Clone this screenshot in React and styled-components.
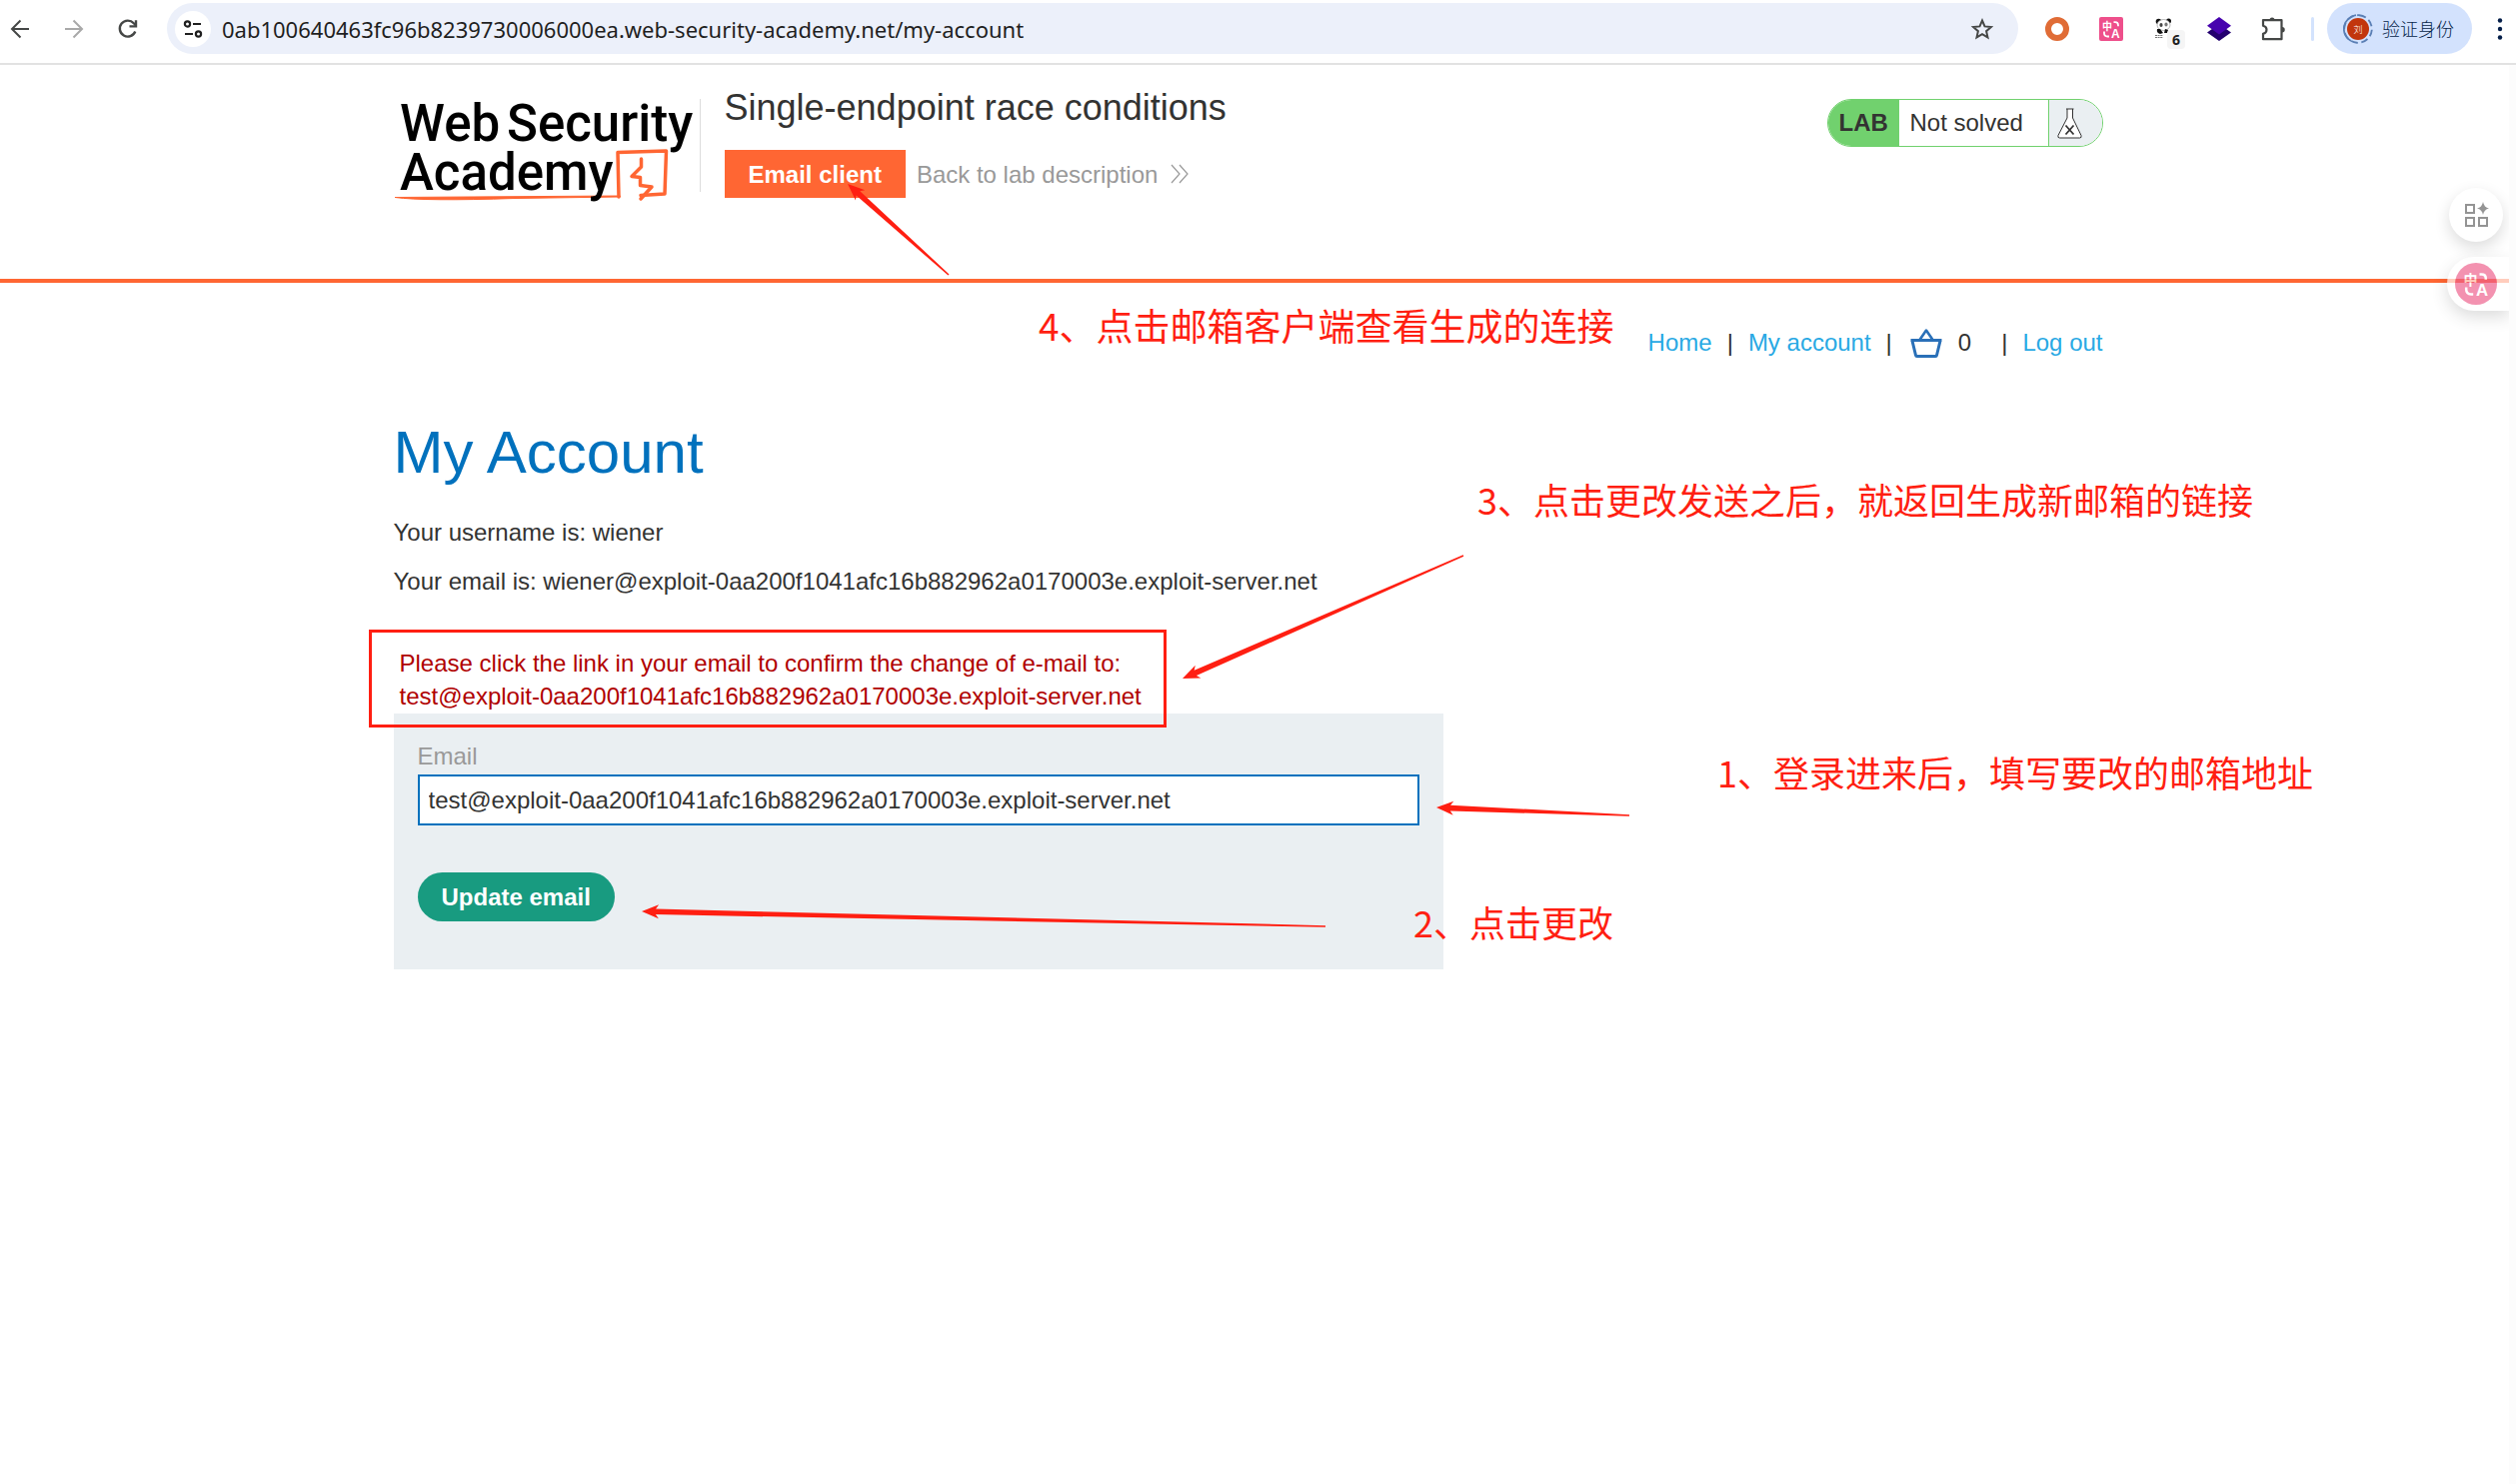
import React from "react";
import styled, { createGlobalStyle } from "styled-components";

const GlobalStyle = createGlobalStyle`
  * {
    box-sizing: border-box;
  }
  body {
    margin: 0;
    background: #fff;
    color: #333332;
    font-family: "Liberation Sans", Arial, sans-serif;
    font-size: 24px;
    line-height: 33px;
  }
  svg {
    display: block;
    flex: none;
  }
  button {
    border: 0;
    padding: 0;
    background: none;
    font: inherit;
    cursor: pointer;
  }
  a {
    text-decoration: none;
  }
`;

const ANNOTATION_RED = "#ff1f12";

/* ---------- browser bar ---------- */

const Toolbar = styled.header`
  display: flex;
  align-items: center;
  height: 65px;
  padding: 3px 4px 9px 8px;
  border-bottom: 2px solid #e2e2e2;
`;

const NavButtons = styled.div`
  display: flex;
  gap: 30px;
  margin-right: 27px;
`;

const IconButton = styled.button`
  position: relative;
  width: 24px;
  height: 24px;
  color: ${(props) => (props.$muted ? "#a9a9a9" : "#454746")};
`;

const Omnibox = styled.div`
  flex: 1;
  display: flex;
  align-items: center;
  height: 51px;
  padding: 0 24px 0 8px;
  border-radius: 26px;
  background: #ecf0fa;
`;

const SiteInfo = styled.button`
  display: flex;
  align-items: center;
  justify-content: center;
  width: 36px;
  height: 36px;
  margin-right: 11px;
  border-radius: 50%;
  background: #fff;
`;

const UrlInput = styled.input`
  flex: 1;
  min-width: 0;
  border: 0;
  padding: 0;
  background: none;
  color: #1f1f1f;
  font-family: "Noto Sans", "Open Sans", sans-serif;
  font-size: 22px;
  outline: none;
`;

const Extensions = styled.div`
  display: flex;
  gap: 30px;
  margin: 0 26px 0 27px;
`;

const Badge = styled.span`
  position: absolute;
  left: 14px;
  top: 13px;
  width: 18px;
  height: 19px;
  border-radius: 4px;
  background: #f5f5f5;
  color: #1f1f1f;
  font: bold 14px/19px "Noto Sans", sans-serif;
  text-align: center;
`;

const Separator = styled.span`
  width: 3px;
  height: 24px;
  margin-right: 13px;
  border-radius: 2px;
  background: #d3e3fd;
`;

const Profile = styled.button`
  display: flex;
  align-items: center;
  gap: 9px;
  height: 51px;
  padding: 0 18px 0 16px;
  margin-right: 16px;
  border-radius: 26px;
  background: #d3e2fd;
  color: #041e49;
  font-family: "Noto Sans CJK SC", sans-serif;
  font-size: 18px;
  font-weight: 300;
`;

/* ---------- page ---------- */

const Page = styled.div`
  position: relative;
  padding-right: 20px;
`;

const Container = styled.div`
  max-width: 1710px;
  margin: 0 auto;
`;

const LabHeader = styled.section`
  margin-right: -20px;
  padding-right: 20px;
  border-bottom: 4px solid #ff6633;
`;

const HeaderRow = styled(Container)`
  display: flex;
  align-items: flex-start;
  min-height: 214px;
`;

const LogoLink = styled.a`
  margin-top: 34px;
  padding-right: 6px;
`;

const HeaderDivider = styled.span`
  width: 1px;
  height: 93px;
  margin: 34px 24px 0 0;
  background: #dcdcdc;
`;

const TitleBlock = styled.div`
  flex: 1;
  padding-top: 23px;
`;

const LabTitle = styled.h2`
  margin: 0 0 22px;
  font-size: 36px;
  font-weight: normal;
  line-height: 40px;
`;

const TitleLinks = styled.div`
  display: flex;
  align-items: center;
  gap: 11px;
`;

const EmailClient = styled.a`
  height: 48px;
  padding: 0 24px;
  background: #ff6633;
  color: #fff;
  font-weight: bold;
  line-height: 50px;
`;

const BackLink = styled.a`
  display: flex;
  align-items: center;
  gap: 13px;
  color: #999;
`;

const LabStatus = styled.div`
  display: flex;
  width: 276px;
  height: 48px;
  margin-top: 34px;
  border: 1px solid #71d16e;
  border-radius: 24px;
  overflow: hidden;
  line-height: 46px;
`;

const LabTag = styled.strong`
  width: 71px;
  padding-left: 11px;
  background: #71d16e;
`;

const LabState = styled.span`
  flex: 1;
  padding-left: 11px;
`;

const LabFlask = styled.span`
  width: 54px;
  padding: 8px 0 0 8px;
  border-left: 1px solid #71d16e;
  background: #eaeff2;
`;

const AccountNav = styled.nav`
  display: flex;
  align-items: center;
  justify-content: flex-end;
  gap: 15px;
  padding-top: 44px;
  line-height: 32px;
  a {
    color: #29a9e4;
  }
`;

const BasketLink = styled.a`
  padding-left: 2px;
`;

const CartCount = styled.span`
  margin-right: 15px;
`;

const PageTitle = styled.h1`
  margin: 60px 0 29px;
  color: #0071bd;
  font-size: 60px;
  font-weight: normal;
  line-height: 68px;
`;

const Info = styled.p`
  margin: 0 0 16px;
`;

const Warning = styled.p`
  margin: 49px 0 1px;
  padding-left: 6px;
  color: #b00000;
`;

const EmailForm = styled.form`
  max-width: 1050px;
  padding: 26px 24px 48px;
  background: #eaeff2;
`;

const Label = styled.label`
  display: block;
  margin-bottom: 2px;
  color: #999;
`;

const EmailInput = styled.input`
  display: block;
  width: 100%;
  height: 51px;
  margin-bottom: 47px;
  padding: 0 9px;
  border: 2px solid #0071bd;
  background: #fff;
  color: #333332;
  font: inherit;
  outline: none;
`;

const SubmitButton = styled.button`
  height: 49px;
  padding: 0 24px;
  border-radius: 25px;
  background: #189b80;
  color: #fff;
  font-weight: bold;
`;

/* ---------- things that float over the page ---------- */

const ScrollTrack = styled.div`
  position: fixed;
  top: 65px;
  right: 0;
  bottom: 0;
  width: 7px;
  background: #fcfcfc;
`;

const FloatButtons = styled.aside`
  position: absolute;
  top: 123px;
  right: 7px;
  display: flex;
  flex-direction: column;
  align-items: flex-end;
  gap: 15px;
`;

const ToolsButton = styled.button`
  display: flex;
  align-items: center;
  justify-content: center;
  width: 54px;
  height: 54px;
  margin-right: 6px;
  border-radius: 50%;
  background: #fff;
  box-shadow: 0 6px 16px rgba(0, 0, 0, 0.14);
`;

const TranslateTab = styled.button`
  width: 62px;
  height: 54px;
  padding-left: 8px;
  border-radius: 27px 0 0 27px;
  background: #fff;
  box-shadow: 0 6px 16px rgba(0, 0, 0, 0.2);
  opacity: 0.68;
`;

const Drawing = styled.svg`
  position: absolute;
  top: 0;
  left: 0;
  pointer-events: none;
`;

const Note = styled.div`
  position: absolute;
  left: ${(props) => props.$x}px;
  top: ${(props) => props.$y}px;
  color: ${ANNOTATION_RED};
  font-family: "Noto Sans CJK SC", sans-serif;
  font-size: ${(props) => props.$size || 36}px;
  line-height: 52px;
  white-space: nowrap;
`;

/* ---------- icons ---------- */

const Stroke = ({ size = 24, width = 2, children, ...rest }) => (
  <svg
    width={size}
    height={size}
    viewBox="0 0 24 24"
    fill="none"
    stroke="currentColor"
    strokeWidth={width}
    {...rest}
  >
    {children}
  </svg>
);

const BackIcon = () => (
  <Stroke>
    <path d="M21 12H4.500M12.500 3.500L4 12l8.500 8.500" />
  </Stroke>
);

const ForwardIcon = () => (
  <Stroke>
    <path d="M3 12h16.500M11.500 3.500L20 12l-8.500 8.500" />
  </Stroke>
);

const ReloadIcon = () => (
  <Stroke width={2.4}>
    <path d="M19.300 14.500A8 8 0 1 1 17.800 6.300L20 8.500" />
    <path d="M20 3.200v6.200h-6.500" />
  </Stroke>
);

const TuneIcon = () => (
  <svg width="20" height="20" viewBox="0 0 20 20" fill="none" stroke="#1f1f1f" strokeWidth="2.200">
    <circle cx="4.500" cy="5" r="2.600" />
    <path d="M10 5h8M2 15h8" />
    <circle cx="15.500" cy="15" r="2.600" />
  </svg>
);

const StarIcon = () => (
  <Stroke>
    <path
      strokeLinejoin="miter"
      d="M12 3.500l2.500 5.900 6.400.6-4.800 4.200 1.400 6.200L12 17.100l-5.500 3.300 1.400-6.200L3.100 10l6.400-.6z"
    />
  </Stroke>
);

const RingIcon = () => (
  <svg width="24" height="24" viewBox="0 0 24 24">
    <circle cx="12" cy="12" r="9" fill="none" stroke="#e06c36" strokeWidth="6" />
  </svg>
);

const TranslateGlyph = () => (
  <g fill="#fff" stroke="none">
    <text x="3" y="12.500" fontSize="10" fontWeight="700" fontFamily="Noto Sans CJK SC">
      中
    </text>
    <text x="12" y="20.500" fontSize="12" fontWeight="700" fontFamily="Liberation Sans">
      A
    </text>
    <path
      d="M14.500 5.200h1.500q3 0 3 3v1M5 14.500v1.500q0 3.500 3.500 3.500h1.500"
      fill="none"
      stroke="#fff"
      strokeWidth="1.800"
    />
  </g>
);

const TranslateIcon = () => (
  <svg width="24" height="24" viewBox="0 0 24 24">
    <rect width="24" height="24" rx="2" fill="#ee4f8b" />
    <TranslateGlyph />
  </svg>
);

const TranslateRound = () => (
  <svg width="42" height="42" viewBox="-3 -3 30 30">
    <circle cx="12" cy="12" r="15" fill="#ee5f8b" />
    <TranslateGlyph />
  </svg>
);

const PandaIcon = () => (
  <svg width="24" height="24" viewBox="0 0 24 24">
    <circle cx="5.500" cy="4.500" r="2.800" fill="#111" />
    <circle cx="15.500" cy="4" r="2.500" fill="#111" />
    <ellipse cx="10.500" cy="8" rx="6.500" ry="5.500" fill="#fff" stroke="#888" strokeWidth=".6" />
    <ellipse cx="8" cy="8" rx="1.600" ry="1.900" fill="#444" />
    <ellipse cx="13" cy="7.500" rx="1.600" ry="1.900" fill="#777" />
    <path d="M4 12q-1 4 3 5l3-1-3-4zM12 12l3 1-1 3h-3z" fill="#111" />
    <path d="M2 18.500h8M2 20.500h8" stroke="#777" strokeWidth="1" strokeDasharray="2 .6" />
  </svg>
);

const LayersIcon = () => (
  <svg width="24" height="24" viewBox="0 0 24 24">
    <path d="M0 15.500L12 7l12 8.500L12 24z" fill="#23006f" />
    <path d="M0 8.800L12 0l12 8.800-12 8.700z" fill="#4703ae" />
  </svg>
);

const PuzzleIcon = () => (
  <Stroke width={2.2}>
    <path
      strokeLinejoin="round"
      d="M2 3.200h18.500v19H2v-5.500q3.500-.8 3.500-4T2 8.700z"
    />
    <path
      d="M8.500 3a2.500 2.500 0 0 1 5 0zM21 10a2.500 2.500 0 0 1 0 5.500z"
      fill="currentColor"
      stroke="none"
    />
  </Stroke>
);

const Avatar = () => (
  <svg width="30" height="30" viewBox="0 0 30 30">
    <circle
      cx="15"
      cy="15"
      r="13.800"
      fill="none"
      stroke="#5a7fb5"
      strokeWidth="1.800"
      strokeDasharray="7 3.500"
      transform="rotate(-85 15 15)"
    />
    <path d="M13 1.200A13.800 13.800 0 0 0 8 27" fill="none" stroke="#5a7fb5" strokeWidth="1.800" />
    <circle cx="15" cy="15" r="11" fill="#c2360c" />
    <text x="15" y="18.500" fontSize="9" fill="#fff" textAnchor="middle" fontFamily="Noto Sans CJK SC">
      刘
    </text>
  </svg>
);

const DotsIcon = () => (
  <svg width="24" height="24" viewBox="0 0 24 24" fill="#041e49">
    <circle cx="12" cy="3.500" r="2.200" />
    <circle cx="12" cy="12" r="2.200" />
    <circle cx="12" cy="20.500" r="2.200" />
  </svg>
);

const Logo = () => (
  <svg width="300" height="106" viewBox="0 0 300 106" overflow="visible">
    <g stroke="#ff6633" fill="none" strokeLinecap="round" strokeLinejoin="round">
      <path d="M226 97L1 98.500q30 4 120 1l105-1.500z" fill="#ff6633" strokeWidth="1" />
      <path d="M225 98l-1-44.500 48.500-1.500-1.500 43-24 1.500" strokeWidth="3.500" />
      <path
        d="M247.500 61l0 8-9.500 9.500 8.500 1v8l11.500 1.500-11 12"
        strokeWidth="3.500"
        transform="translate(0 -1)"
      />
    </g>
    <g fontFamily="Roboto" fontWeight="500" fontSize="51" fill="#000">
      <text x="6" y="42">Web</text>
      <text x="113" y="42">Security</text>
      <text x="6" y="91">Academy</text>
    </g>
  </svg>
);

const Chevrons = () => (
  <svg width="18" height="20" viewBox="0 0 18 20" fill="none" stroke="#999" strokeWidth="1.200">
    <path d="M1 1l8 9-8 9M9 1l8 9-8 9" />
  </svg>
);

const FlaskIcon = () => (
  <svg width="25" height="31" viewBox="0 0 25 31" stroke="#333" fill="#fff">
    <path d="M9 1h7.500M10 1v9L1 27.500q-.8 2.500 1.500 2.500h20q2.300 0 1.500-2.500L15.500 10V1" />
    <path d="M8.500 17.500l8 9M16.500 17.500l-8 9" strokeWidth="1.800" />
  </svg>
);

const BasketIcon = () => (
  <svg width="34" height="29" viewBox="0 0 34 29" fill="none" stroke="#2a70b8" strokeLinejoin="round">
    <path d="M1.500 11.500h31M3 12l3.500 14.500q.2 1 1.200 1h18.600q1 0 1.200-1L31 12" strokeWidth="3" />
    <path d="M10.500 11L17 1.500 23.500 11" strokeWidth="2.600" />
  </svg>
);

const AppsIcon = () => (
  <svg width="25" height="26" viewBox="0 0 25 26" fill="none" stroke="#949494" strokeWidth="2">
    <rect x="2" y="3" width="8" height="8" />
    <rect x="2" y="16" width="8" height="8" />
    <rect x="15" y="16" width="8" height="8" />
    <path d="M19 0q1 5.500 6 6.500-5 1-6 6.500-1-5.500-6-6.500 5-1 6-6.500z" fill="#949494" stroke="none" />
  </svg>
);

/* ---------- annotations ---------- */

// arrow that tapers from its head to a thin tail
const Arrow = ({ from, to }) => {
  const [x1, y1] = from;
  const [x2, y2] = to;
  const length = Math.hypot(x2 - x1, y2 - y1);
  const ux = (x1 - x2) / length;
  const uy = (y1 - y2) / length;
  const point = (along, side) =>
    `${x2 + ux * along - uy * side},${y2 + uy * along + ux * side}`;
  const points = [
    point(0, 0),
    point(17, 7),
    point(14, 2.8),
    point(length, 0.8),
    point(length, -0.8),
    point(14, -2.8),
    point(17, -7),
  ];
  return <polygon points={points.join(" ")} fill={ANNOTATION_RED} />;
};

const arrows = [
  { from: [949, 210], to: [848, 119] },
  { from: [1464, 491], to: [1183, 614] },
  { from: [1630, 751], to: [1437, 743] },
  { from: [1326, 862], to: [642, 847] },
];

const notes = [
  { x: 1039, y: 234, size: 37, text: "4、点击邮箱客户端查看生成的连接" },
  { x: 1478, y: 408, text: "3、点击更改发送之后，就返回生成新邮箱的链接" },
  { x: 1718, y: 681, text: "1、登录进来后，填写要改的邮箱地址" },
  { x: 1414, y: 831, text: "2、点击更改" },
];

const Annotations = () => (
  <>
    <Drawing width="2000" height="1000" viewBox="0 0 2000 1000">
      <rect
        x="370.500"
        y="566.500"
        width="795"
        height="95"
        fill="none"
        stroke={ANNOTATION_RED}
        strokeWidth="3"
      />
      {arrows.map((arrow) => (
        <Arrow key={arrow.to.join()} {...arrow} />
      ))}
    </Drawing>
    {notes.map((note) => (
      <Note key={note.text} $x={note.x} $y={note.y} $size={note.size}>
        {note.text}
      </Note>
    ))}
  </>
);

const BrowserBar = () => (
  <Toolbar>
    <NavButtons>
      <IconButton aria-label="Back">
        <BackIcon />
      </IconButton>
      <IconButton aria-label="Forward" $muted>
        <ForwardIcon />
      </IconButton>
      <IconButton aria-label="Reload">
        <ReloadIcon />
      </IconButton>
    </NavButtons>
    <Omnibox>
      <SiteInfo aria-label="Site information">
        <TuneIcon />
      </SiteInfo>
      <UrlInput
        aria-label="Address"
        defaultValue="0ab100640463fc96b8239730006000ea.web-security-academy.net/my-account"
      />
      <IconButton aria-label="Bookmark">
        <StarIcon />
      </IconButton>
    </Omnibox>
    <Extensions>
      <IconButton aria-label="Recorder">
        <RingIcon />
      </IconButton>
      <IconButton aria-label="Translate">
        <TranslateIcon />
      </IconButton>
      <IconButton aria-label="Panda">
        <PandaIcon />
        <Badge>6</Badge>
      </IconButton>
      <IconButton aria-label="Layers">
        <LayersIcon />
      </IconButton>
      <IconButton aria-label="Extensions">
        <PuzzleIcon />
      </IconButton>
    </Extensions>
    <Separator />
    <Profile>
      <Avatar />
      验证身份
    </Profile>
    <IconButton aria-label="Menu">
      <DotsIcon />
    </IconButton>
  </Toolbar>
);

const App = () => (
  <>
    <GlobalStyle />
    <BrowserBar />
    <Page>
      <LabHeader>
        <HeaderRow>
          <LogoLink href="#" aria-label="Web Security Academy">
            <Logo />
          </LogoLink>
          <HeaderDivider />
          <TitleBlock>
            <LabTitle>Single-endpoint race conditions</LabTitle>
            <TitleLinks>
              <EmailClient href="#">Email client</EmailClient>
              <BackLink href="#">
                Back to lab description
                <Chevrons />
              </BackLink>
            </TitleLinks>
          </TitleBlock>
          <LabStatus>
            <LabTag>LAB</LabTag>
            <LabState>Not solved</LabState>
            <LabFlask>
              <FlaskIcon />
            </LabFlask>
          </LabStatus>
        </HeaderRow>
      </LabHeader>
      <Container>
        <AccountNav>
          <a href="#">Home</a>
          <span>|</span>
          <a href="#">My account</a>
          <span>|</span>
          <BasketLink href="#" aria-label="Basket">
            <BasketIcon />
          </BasketLink>
          <CartCount>0</CartCount>
          <span>|</span>
          <a href="#">Log out</a>
        </AccountNav>
        <PageTitle>My Account</PageTitle>
        <Info>Your username is: wiener</Info>
        <Info>
          Your email is: wiener@exploit-0aa200f1041afc16b882962a0170003e.exploit-server.net
        </Info>
        <Warning>
          Please click the link in your email to confirm the change of e-mail to:
          <br />
          test@exploit-0aa200f1041afc16b882962a0170003e.exploit-server.net
        </Warning>
        <EmailForm>
          <Label htmlFor="email">Email</Label>
          <EmailInput
            id="email"
            type="email"
            defaultValue="test@exploit-0aa200f1041afc16b882962a0170003e.exploit-server.net"
          />
          <SubmitButton type="button">Update email</SubmitButton>
        </EmailForm>
      </Container>
      <Annotations />
      <FloatButtons>
        <ToolsButton aria-label="Tools">
          <AppsIcon />
        </ToolsButton>
        <TranslateTab aria-label="Translate page">
          <TranslateRound />
        </TranslateTab>
      </FloatButtons>
    </Page>
    <ScrollTrack />
  </>
);

export default App;
